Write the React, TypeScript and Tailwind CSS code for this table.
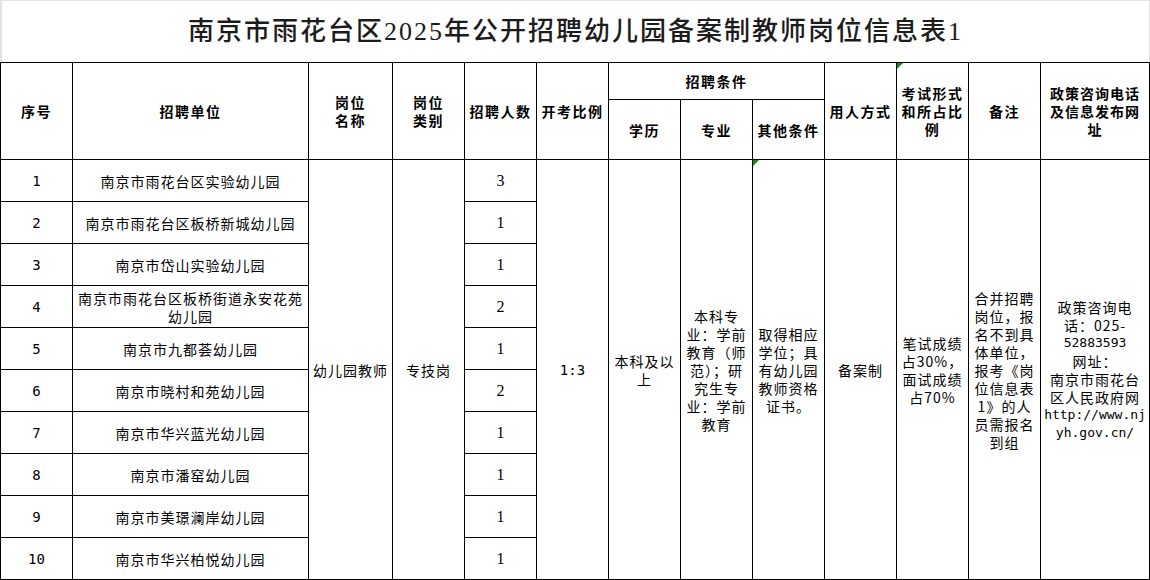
const units = [
  { no: "1", name: ["南京市雨花台区实验幼儿园"], count: "3" },
  { no: "2", name: ["南京市雨花台区板桥新城幼儿园"], count: "1" },
  { no: "3", name: ["南京市岱山实验幼儿园"], count: "1" },
  { no: "4", name: ["南京市雨花台区板桥街道永安花苑", "幼儿园"], count: "2" },
  { no: "5", name: ["南京市九都荟幼儿园"], count: "1" },
  { no: "6", name: ["南京市晓村和苑幼儿园"], count: "2" },
  { no: "7", name: ["南京市华兴蓝光幼儿园"], count: "1" },
  { no: "8", name: ["南京市潘窑幼儿园"], count: "1" },
  { no: "9", name: ["南京市美璟澜岸幼儿园"], count: "1" },
  { no: "10", name: ["南京市华兴柏悦幼儿园"], count: "1" },
];

const colWidths = [72, 236, 84, 72, 72, 72, 72, 72, 72, 72, 72, 72, 109];

const Lines = ({ lines, mono = [] }: { lines: string[]; mono?: number[] }) => (
  <>
    {lines.map((l, i) => (
      <div
        key={i}
        className={
          mono.includes(i)
            ? "whitespace-nowrap tracking-normal font-['DejaVu_Sans_Mono',monospace] text-[13px]"
            : "whitespace-nowrap"
        }
      >
        {l}
      </div>
    ))}
  </>
);

const Flag = () => (
  <span className="absolute left-0 top-0 w-0 h-0 border-t-[6px] border-t-[#138a13] border-r-[6px] border-r-transparent" />
);

const th = "border border-black font-bold text-[14px] tracking-[1.5px] leading-[18px] text-center align-middle p-0";
const td = "border border-black text-[14px] tracking-[1px] leading-[18px] text-center align-middle p-0";

export default function App() {
  return (
    <div className="w-[1150px] h-[580px] overflow-hidden bg-white text-black font-['Noto_Sans_CJK_SC',sans-serif]">
      <div className="h-[62px] flex items-center justify-center border-t border-l-2 border-r border-[#e3e3e3]">
        <h1 className="text-[26px] font-medium tracking-[2px] text-[#1c1c1c] font-['Liberation_Serif','Noto_Sans_CJK_SC',serif]">
          南京市雨花台区2025年公开招聘幼儿园备案制教师岗位信息表1
        </h1>
      </div>
      <table className="table-fixed border-collapse w-[1149px]">
        <colgroup>
          {colWidths.map((w, i) => (
            <col key={i} style={{ width: w }} />
          ))}
        </colgroup>
        <thead>
          <tr className="h-[37px]">
            <th rowSpan={2} className={th}>序号</th>
            <th rowSpan={2} className={th}>招聘单位</th>
            <th rowSpan={2} className={th}><Lines lines={["岗位", "名称"]} /></th>
            <th rowSpan={2} className={th}><Lines lines={["岗位", "类别"]} /></th>
            <th rowSpan={2} className={`${th} tracking-[0.5px]`}>招聘人数</th>
            <th rowSpan={2} className={`${th} tracking-[0.5px]`}>开考比例</th>
            <th colSpan={3} className={th}>招聘条件</th>
            <th rowSpan={2} className={`${th} tracking-[0.5px]`}>用人方式</th>
            <th rowSpan={2} className={`${th} relative tracking-[0.5px]`}>
              <Flag />
              <Lines lines={["考试形式", "和所占比", "例"]} />
            </th>
            <th rowSpan={2} className={th}>备注</th>
            <th rowSpan={2} className={`${th} tracking-[1px]`}>
              <Lines lines={["政策咨询电话", "及信息发布网", "址"]} />
            </th>
          </tr>
          <tr className="h-[60px]">
            <th className={th}>学历</th>
            <th className={th}>专业</th>
            <th className={`${th} tracking-[0.5px]`}>其他条件</th>
          </tr>
        </thead>
        <tbody>
          {units.map((u, idx) => (
            <tr key={u.no} className="h-[42px]">
              <td className={`${td} font-['DejaVu_Sans_Mono',monospace] text-[13px] tracking-normal`}>{u.no}</td>
              <td className={`${td} leading-[17px]`}>
                <Lines lines={u.name} />
              </td>
              {idx === 0 && (
                <>
                  <td rowSpan={10} className={td}>幼儿园教师</td>
                  <td rowSpan={10} className={td}>专技岗</td>
                </>
              )}
              <td className={`${td} font-['Liberation_Serif',serif] text-[16px] tracking-normal`}>{u.count}</td>
              {idx === 0 && (
                <>
                  <td rowSpan={10} className={`${td} font-['DejaVu_Sans_Mono',monospace] text-[13px] tracking-normal`}>1:3</td>
                  <td rowSpan={10} className={td}>
                    <Lines lines={["本科及以", "上"]} />
                  </td>
                  <td rowSpan={10} className={td}>
                    <Lines lines={["本科专", "业：学前", "教育（师", "范）；研", "究生专", "业：学前", "教育"]} />
                  </td>
                  <td rowSpan={10} className={`${td} relative`}>
                    <Flag />
                    <Lines lines={["取得相应", "学位；具", "有幼儿园", "教师资格", "证书。"]} />
                  </td>
                  <td rowSpan={10} className={td}>备案制</td>
                  <td rowSpan={10} className={td}>
                    <Lines lines={["笔试成绩", "占30%，", "面试成绩", "占70%"]} />
                  </td>
                  <td rowSpan={10} className={td}>
                    <Lines lines={["合并招聘", "岗位，报", "名不到具", "体单位，", "报考《岗", "位信息表", "1》的人", "员需报名", "到组"]} />
                  </td>
                  <td rowSpan={10} className={`${td} tracking-[0.5px]`}>
                    <Lines
                      lines={["政策咨询电", "话：025-", "52883593", "网址：", "南京市雨花台", "区人民政府网", "http://www.nj", "yh.gov.cn/"]}
                      mono={[2, 6, 7]}
                    />
                  </td>
                </>
              )}
            </tr>
          ))}
        </tbody>
      </table>
    </div>
  );
}
